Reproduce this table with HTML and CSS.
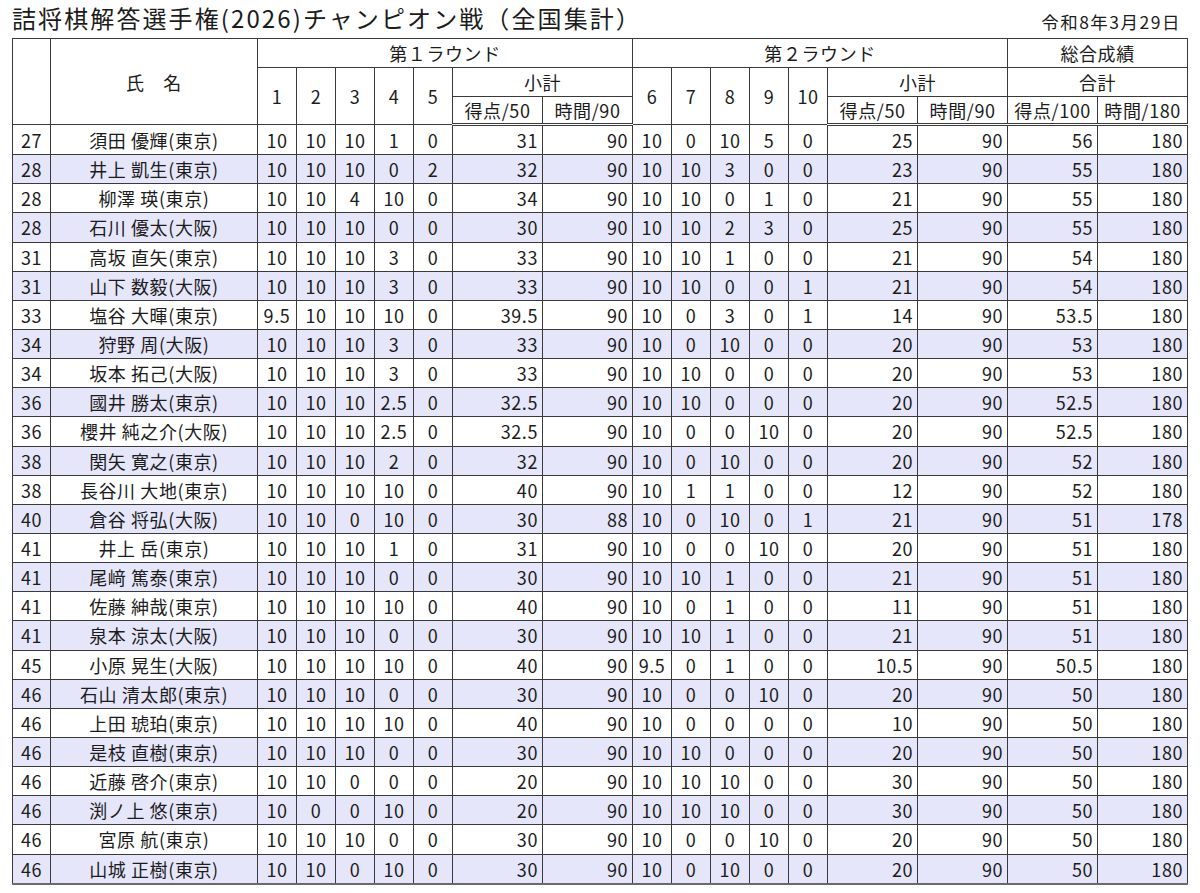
FILE: index.html
```html
<!DOCTYPE html>
<html lang="ja">
<head>
<meta charset="utf-8">
<title>詰将棋解答選手権(2026)チャンピオン戦（全国集計）</title>
<link rel="stylesheet" href="styles.css">
</head>
<body>
<div class="page">
  <header class="top">
    <h1 class="title">詰将棋解答選手権(2026)チャンピオン戦（全国集計）</h1>
    <div class="date">令和8年3月29日</div>
  </header>
  <table class="results">
    <colgroup>
      <col class="c-rank"><col class="c-name">
      <col class="c-q"><col class="c-q"><col class="c-q"><col class="c-q"><col class="c-q">
      <col class="c-sub"><col class="c-sub">
      <col class="c-q"><col class="c-q"><col class="c-q"><col class="c-q"><col class="c-q">
      <col class="c-sub"><col class="c-sub">
      <col class="c-sub"><col class="c-sub">
    </colgroup>
    <thead>
      <tr>
        <th rowspan="3"></th>
        <th rowspan="3">氏　名</th>
        <th colspan="7">第１ラウンド</th>
        <th colspan="7">第２ラウンド</th>
        <th colspan="2">総合成績</th>
      </tr>
      <tr>
        <th rowspan="2">1</th><th rowspan="2">2</th><th rowspan="2">3</th><th rowspan="2">4</th><th rowspan="2">5</th>
        <th colspan="2">小計</th>
        <th rowspan="2">6</th><th rowspan="2">7</th><th rowspan="2">8</th><th rowspan="2">9</th><th rowspan="2">10</th>
        <th colspan="2">小計</th>
        <th colspan="2">合計</th>
      </tr>
      <tr class="last">
        <th>得点/50</th><th>時間/90</th>
        <th>得点/50</th><th>時間/90</th>
        <th>得点/100</th><th>時間/180</th>
      </tr>
    </thead>
    <tbody>
      <tr><td class="rank">27</td><td class="name">須田 優輝(東京)</td><td>10</td><td>10</td><td>10</td><td>1</td><td>0</td><td class="r">31</td><td class="r">90</td><td>10</td><td>0</td><td>10</td><td>5</td><td>0</td><td class="r">25</td><td class="r">90</td><td class="r">56</td><td class="r">180</td></tr>
      <tr><td class="rank">28</td><td class="name">井上 凱生(東京)</td><td>10</td><td>10</td><td>10</td><td>0</td><td>2</td><td class="r">32</td><td class="r">90</td><td>10</td><td>10</td><td>3</td><td>0</td><td>0</td><td class="r">23</td><td class="r">90</td><td class="r">55</td><td class="r">180</td></tr>
      <tr><td class="rank">28</td><td class="name">柳澤 瑛(東京)</td><td>10</td><td>10</td><td>4</td><td>10</td><td>0</td><td class="r">34</td><td class="r">90</td><td>10</td><td>10</td><td>0</td><td>1</td><td>0</td><td class="r">21</td><td class="r">90</td><td class="r">55</td><td class="r">180</td></tr>
      <tr><td class="rank">28</td><td class="name">石川 優太(大阪)</td><td>10</td><td>10</td><td>10</td><td>0</td><td>0</td><td class="r">30</td><td class="r">90</td><td>10</td><td>10</td><td>2</td><td>3</td><td>0</td><td class="r">25</td><td class="r">90</td><td class="r">55</td><td class="r">180</td></tr>
      <tr><td class="rank">31</td><td class="name">高坂 直矢(東京)</td><td>10</td><td>10</td><td>10</td><td>3</td><td>0</td><td class="r">33</td><td class="r">90</td><td>10</td><td>10</td><td>1</td><td>0</td><td>0</td><td class="r">21</td><td class="r">90</td><td class="r">54</td><td class="r">180</td></tr>
      <tr><td class="rank">31</td><td class="name">山下 数毅(大阪)</td><td>10</td><td>10</td><td>10</td><td>3</td><td>0</td><td class="r">33</td><td class="r">90</td><td>10</td><td>10</td><td>0</td><td>0</td><td>1</td><td class="r">21</td><td class="r">90</td><td class="r">54</td><td class="r">180</td></tr>
      <tr><td class="rank">33</td><td class="name">塩谷 大暉(東京)</td><td>9.5</td><td>10</td><td>10</td><td>10</td><td>0</td><td class="r">39.5</td><td class="r">90</td><td>10</td><td>0</td><td>3</td><td>0</td><td>1</td><td class="r">14</td><td class="r">90</td><td class="r">53.5</td><td class="r">180</td></tr>
      <tr><td class="rank">34</td><td class="name">狩野 周(大阪)</td><td>10</td><td>10</td><td>10</td><td>3</td><td>0</td><td class="r">33</td><td class="r">90</td><td>10</td><td>0</td><td>10</td><td>0</td><td>0</td><td class="r">20</td><td class="r">90</td><td class="r">53</td><td class="r">180</td></tr>
      <tr><td class="rank">34</td><td class="name">坂本 拓己(大阪)</td><td>10</td><td>10</td><td>10</td><td>3</td><td>0</td><td class="r">33</td><td class="r">90</td><td>10</td><td>10</td><td>0</td><td>0</td><td>0</td><td class="r">20</td><td class="r">90</td><td class="r">53</td><td class="r">180</td></tr>
      <tr><td class="rank">36</td><td class="name">國井 勝太(東京)</td><td>10</td><td>10</td><td>10</td><td>2.5</td><td>0</td><td class="r">32.5</td><td class="r">90</td><td>10</td><td>10</td><td>0</td><td>0</td><td>0</td><td class="r">20</td><td class="r">90</td><td class="r">52.5</td><td class="r">180</td></tr>
      <tr><td class="rank">36</td><td class="name">櫻井 純之介(大阪)</td><td>10</td><td>10</td><td>10</td><td>2.5</td><td>0</td><td class="r">32.5</td><td class="r">90</td><td>10</td><td>0</td><td>0</td><td>10</td><td>0</td><td class="r">20</td><td class="r">90</td><td class="r">52.5</td><td class="r">180</td></tr>
      <tr><td class="rank">38</td><td class="name">関矢 寛之(東京)</td><td>10</td><td>10</td><td>10</td><td>2</td><td>0</td><td class="r">32</td><td class="r">90</td><td>10</td><td>0</td><td>10</td><td>0</td><td>0</td><td class="r">20</td><td class="r">90</td><td class="r">52</td><td class="r">180</td></tr>
      <tr><td class="rank">38</td><td class="name">長谷川 大地(東京)</td><td>10</td><td>10</td><td>10</td><td>10</td><td>0</td><td class="r">40</td><td class="r">90</td><td>10</td><td>1</td><td>1</td><td>0</td><td>0</td><td class="r">12</td><td class="r">90</td><td class="r">52</td><td class="r">180</td></tr>
      <tr><td class="rank">40</td><td class="name">倉谷 将弘(大阪)</td><td>10</td><td>10</td><td>0</td><td>10</td><td>0</td><td class="r">30</td><td class="r">88</td><td>10</td><td>0</td><td>10</td><td>0</td><td>1</td><td class="r">21</td><td class="r">90</td><td class="r">51</td><td class="r">178</td></tr>
      <tr><td class="rank">41</td><td class="name">井上 岳(東京)</td><td>10</td><td>10</td><td>10</td><td>1</td><td>0</td><td class="r">31</td><td class="r">90</td><td>10</td><td>0</td><td>0</td><td>10</td><td>0</td><td class="r">20</td><td class="r">90</td><td class="r">51</td><td class="r">180</td></tr>
      <tr><td class="rank">41</td><td class="name">尾﨑 篤泰(東京)</td><td>10</td><td>10</td><td>10</td><td>0</td><td>0</td><td class="r">30</td><td class="r">90</td><td>10</td><td>10</td><td>1</td><td>0</td><td>0</td><td class="r">21</td><td class="r">90</td><td class="r">51</td><td class="r">180</td></tr>
      <tr><td class="rank">41</td><td class="name">佐藤 紳哉(東京)</td><td>10</td><td>10</td><td>10</td><td>10</td><td>0</td><td class="r">40</td><td class="r">90</td><td>10</td><td>0</td><td>1</td><td>0</td><td>0</td><td class="r">11</td><td class="r">90</td><td class="r">51</td><td class="r">180</td></tr>
      <tr><td class="rank">41</td><td class="name">泉本 涼太(大阪)</td><td>10</td><td>10</td><td>10</td><td>0</td><td>0</td><td class="r">30</td><td class="r">90</td><td>10</td><td>10</td><td>1</td><td>0</td><td>0</td><td class="r">21</td><td class="r">90</td><td class="r">51</td><td class="r">180</td></tr>
      <tr><td class="rank">45</td><td class="name">小原 晃生(大阪)</td><td>10</td><td>10</td><td>10</td><td>10</td><td>0</td><td class="r">40</td><td class="r">90</td><td>9.5</td><td>0</td><td>1</td><td>0</td><td>0</td><td class="r">10.5</td><td class="r">90</td><td class="r">50.5</td><td class="r">180</td></tr>
      <tr><td class="rank">46</td><td class="name">石山 清太郎(東京)</td><td>10</td><td>10</td><td>10</td><td>0</td><td>0</td><td class="r">30</td><td class="r">90</td><td>10</td><td>0</td><td>0</td><td>10</td><td>0</td><td class="r">20</td><td class="r">90</td><td class="r">50</td><td class="r">180</td></tr>
      <tr><td class="rank">46</td><td class="name">上田 琥珀(東京)</td><td>10</td><td>10</td><td>10</td><td>10</td><td>0</td><td class="r">40</td><td class="r">90</td><td>10</td><td>0</td><td>0</td><td>0</td><td>0</td><td class="r">10</td><td class="r">90</td><td class="r">50</td><td class="r">180</td></tr>
      <tr><td class="rank">46</td><td class="name">是枝 直樹(東京)</td><td>10</td><td>10</td><td>10</td><td>0</td><td>0</td><td class="r">30</td><td class="r">90</td><td>10</td><td>10</td><td>0</td><td>0</td><td>0</td><td class="r">20</td><td class="r">90</td><td class="r">50</td><td class="r">180</td></tr>
      <tr><td class="rank">46</td><td class="name">近藤 啓介(東京)</td><td>10</td><td>10</td><td>0</td><td>0</td><td>0</td><td class="r">20</td><td class="r">90</td><td>10</td><td>10</td><td>10</td><td>0</td><td>0</td><td class="r">30</td><td class="r">90</td><td class="r">50</td><td class="r">180</td></tr>
      <tr><td class="rank">46</td><td class="name">渕ノ上 悠(東京)</td><td>10</td><td>0</td><td>0</td><td>10</td><td>0</td><td class="r">20</td><td class="r">90</td><td>10</td><td>10</td><td>10</td><td>0</td><td>0</td><td class="r">30</td><td class="r">90</td><td class="r">50</td><td class="r">180</td></tr>
      <tr><td class="rank">46</td><td class="name">宮原 航(東京)</td><td>10</td><td>10</td><td>10</td><td>0</td><td>0</td><td class="r">30</td><td class="r">90</td><td>10</td><td>0</td><td>0</td><td>10</td><td>0</td><td class="r">20</td><td class="r">90</td><td class="r">50</td><td class="r">180</td></tr>
      <tr><td class="rank">46</td><td class="name">山城 正樹(東京)</td><td>10</td><td>10</td><td>0</td><td>10</td><td>0</td><td class="r">30</td><td class="r">90</td><td>10</td><td>0</td><td>10</td><td>0</td><td>0</td><td class="r">20</td><td class="r">90</td><td class="r">50</td><td class="r">180</td></tr>
    </tbody>
  </table>
</div>
</body>
</html>
```

FILE: styles.css
```css
html, body {
  margin: 0;
  padding: 0;
  background: #ffffff;
}

body {
  font-family: "Noto Sans CJK JP", "Noto Sans", sans-serif;
  color: #1c1c1c;
}

.page {
  padding: 0 12px 0 12px;
}

.top {
  display: flex;
  justify-content: space-between;
  align-items: flex-end;
  height: 38px;
}

.title {
  margin: 0;
  font-size: 24px;
  font-weight: normal;
  letter-spacing: 2.1px;
  line-height: 35px;
  height: 38px;
  white-space: nowrap;
}

.date {
  font-size: 17.5px;
  letter-spacing: 1.5px;
  line-height: 20px;
  padding: 0 7px 6px 0;
  white-space: nowrap;
}

.results {
  border-collapse: collapse;
  table-layout: fixed;
  width: 1175px;
  font-size: 18px;
  letter-spacing: 0.6px;
  border: 1px solid #333;
  border-bottom: 2px solid #6a6a6a;
}

.c-rank { width: 38px; }
.c-name { width: 207px; }
.c-q { width: 39px; }
.c-sub { width: 90px; }

.results th,
.results td {
  border: 1px solid #3a3a3a;
  padding: 0;
  white-space: nowrap;
  overflow: hidden;
  line-height: 22px;
}

.results th {
  font-weight: normal;
  text-align: center;
  height: 28px;
}

.results thead tr.last th {
  border-bottom: 3px double #3a3a3a;
  height: 26px;
}

.results td {
  text-align: center;
  height: 28.15px;
}

.results td.r {
  text-align: right;
  padding-right: 4px;
}

.results td.rank {
  text-align: center;
}

.results tbody tr:nth-child(even) td {
  background: #e6e6fa;
}
```
